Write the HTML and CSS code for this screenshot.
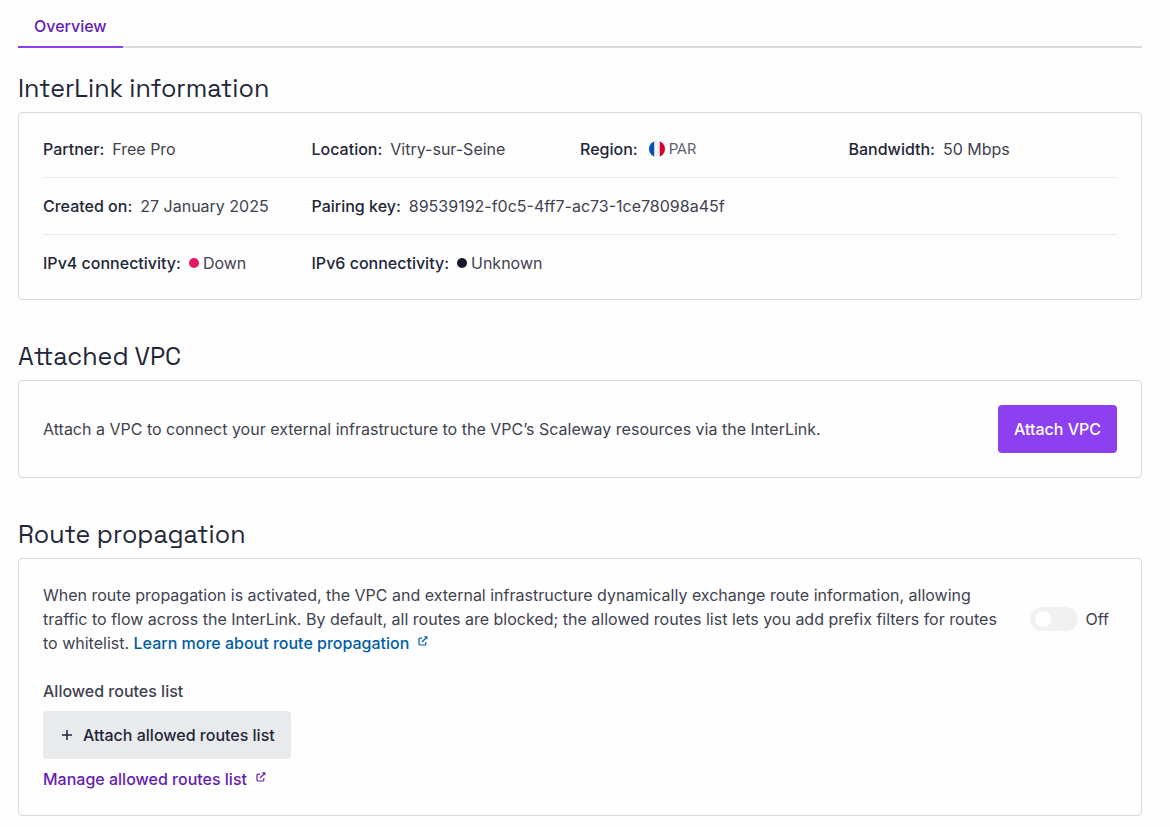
FILE: index.html
```html
<!DOCTYPE html>
<html lang="en">
<head>
<meta charset="utf-8">
<title>InterLink overview</title>
<link rel="stylesheet" href="styles.css">
</head>
<body>
<nav class="tabs"><a class="tab" href="#overview">Overview</a></nav>
<main id="overview">
<section class="section">
<h2 class="title">InterLink information</h2>
<div class="card info">
<dl class="row">
<div class="item"><dt>Partner:</dt><dd>Free Pro</dd></div>
<div class="item"><dt>Location:</dt><dd>Vitry-sur-Seine</dd></div>
<div class="item"><dt>Region:</dt><dd class="region"><svg class="flag" viewBox="0 0 16 16" aria-hidden="true"><clipPath id="disc"><circle cx="8" cy="8" r="8"/></clipPath><g clip-path="url(#disc)"><path fill="#f0f0f0" d="M0 0h16v16H0z"/><path fill="#0052b4" d="M0 0h5.2v16H0z"/><path fill="#d80027" d="M10.8 0H16v16h-5.2z"/></g></svg>PAR</dd></div>
<div class="item"><dt>Bandwidth:</dt><dd>50 Mbps</dd></div>
</dl>
<dl class="row">
<div class="item"><dt>Created on:</dt><dd>27 January 2025</dd></div>
<div class="item wide"><dt>Pairing key:</dt><dd>89539192-f0c5-4ff7-ac73-1ce78098a45f</dd></div>
</dl>
<dl class="row">
<div class="item"><dt>IPv4 connectivity:</dt><dd class="status"><span class="dot down"></span>Down</dd></div>
<div class="item"><dt>IPv6 connectivity:</dt><dd class="status"><span class="dot unknown"></span>Unknown</dd></div>
</dl>
</div>
</section>
<section class="section">
<h2 class="title">Attached VPC</h2>
<div class="card vpc">
<p>Attach a VPC to connect your external infrastructure to the VPC’s Scaleway resources via the InterLink.</p>
<button class="button primary" type="button">Attach VPC</button>
</div>
</section>
<section class="section">
<h2 class="title">Route propagation</h2>
<div class="card routes">
<div class="propagation">
<p>When route propagation is activated, the VPC and external infrastructure dynamically exchange route information, allowing traffic to flow across the InterLink. By default, all routes are blocked; the allowed routes list lets you add prefix filters for routes to whitelist. <a class="link info-link" href="#learn">Learn more about route propagation<svg class="external" viewBox="0 0 10 10" aria-hidden="true"><path d="M4 2.2H2A1 1 0 0 0 1 3.2V8a1 1 0 0 0 1 1h4.8a1 1 0 0 0 1-1V6M8 2 4 6"/><path class="head" d="M5.8.2h3.6v3.6z"/></svg></a></p>
<label class="toggle"><input type="checkbox" role="switch" disabled><span>Off</span></label>
</div>
<div class="allowed">
<h3 class="subtitle">Allowed routes list</h3>
<button class="button neutral" type="button"><svg class="plus" viewBox="0 0 16 16" aria-hidden="true"><path d="M8 3v10M3 8h10"/></svg>Attach allowed routes list</button>
<a class="link" href="#manage">Manage allowed routes list<svg class="external" viewBox="0 0 10 10" aria-hidden="true"><path d="M4 2.2H2A1 1 0 0 0 1 3.2V8a1 1 0 0 0 1 1h4.8a1 1 0 0 0 1-1V6M8 2 4 6"/><path class="head" d="M5.8.2h3.6v3.6z"/></svg></a>
</div>
</div>
</section>
</main>
</body>
</html>
```

FILE: styles.css
```css
* { box-sizing: border-box; }
body { margin: 0; padding: 6px 28px 11px 18px; background: #fefefe; color: #3f4250; font: 400 16px/24px Inter, sans-serif; }
h2, h3, p, dl, dd { margin: 0; }
.tabs { display: flex; border-bottom: 2px solid #d9dadd; }
.tab { padding: 8px 16px; margin-bottom: -2px; border-bottom: 2px solid #8c40ef; color: #641cb3; font-weight: 500; text-decoration: none; }
#overview { display: flex; flex-direction: column; gap: 40px; padding-top: 24px; }
.section { display: flex; flex-direction: column; gap: 8px; }
.title { color: #222638; font: 400 25px/32px "Space Grotesk", Lato, sans-serif; }
.card { padding: 24px; border: 1px solid #d9dadd; border-radius: 4px; }
.row { display: grid; grid-template-columns: repeat(4, 1fr); padding: 16px 0; border-bottom: 1px solid #e9eaeb; }
.row:first-child { padding-top: 0; }
.row:last-child { padding-bottom: 0; border-bottom: 0; }
.item { display: flex; align-items: center; gap: 8px; white-space: nowrap; }
.wide { grid-column: span 3; }
dt { color: #222638; font-weight: 500; }
.region, .status { display: flex; align-items: center; gap: 4px; }
.region { padding-left: 3px; color: #5e6272; font: 400 15px/24px Roboto, sans-serif; }
.flag { width: 16px; height: 16px; }
.dot { width: 10px; height: 10px; border-radius: 50%; }
.down { background: #e51963; }
.unknown { background: #151a2d; }
.vpc, .propagation { display: flex; align-items: center; justify-content: space-between; gap: 24px; }
.button { display: flex; align-items: center; gap: 8px; height: 48px; padding: 0 16px; border: 0; border-radius: 4px; font: 500 16px/24px Inter, sans-serif; white-space: nowrap; }
.primary { background: #8c40ef; color: #fff; }
.neutral { background: #e9eaeb; color: #222638; }
.routes { display: flex; flex-direction: column; gap: 24px; }
.toggle { display: flex; align-items: center; gap: 8px; padding-right: 8px; }
.toggle input { appearance: none; display: flex; align-items: center; width: 48px; height: 24px; margin: 0; padding: 4px 5px; border-radius: 12px; background: #f1f1f1; }
.toggle input::before { content: ""; width: 16px; height: 16px; border-radius: 50%; background: #fff; }
.allowed { display: flex; flex-direction: column; align-items: flex-start; gap: 8px; }
.subtitle { font-size: 16px; font-weight: 500; }
.link { color: #641cb3; font-weight: 500; text-decoration: none; }
.info-link { color: #005da3; }
.external { width: 10px; height: 10px; margin-left: 9px; vertical-align: 3px; fill: none; stroke: currentColor; stroke-width: 1.2; }
.external .head { fill: currentColor; stroke: none; }
.plus { width: 16px; height: 16px; fill: none; stroke: currentColor; stroke-width: 1.5; }
```
